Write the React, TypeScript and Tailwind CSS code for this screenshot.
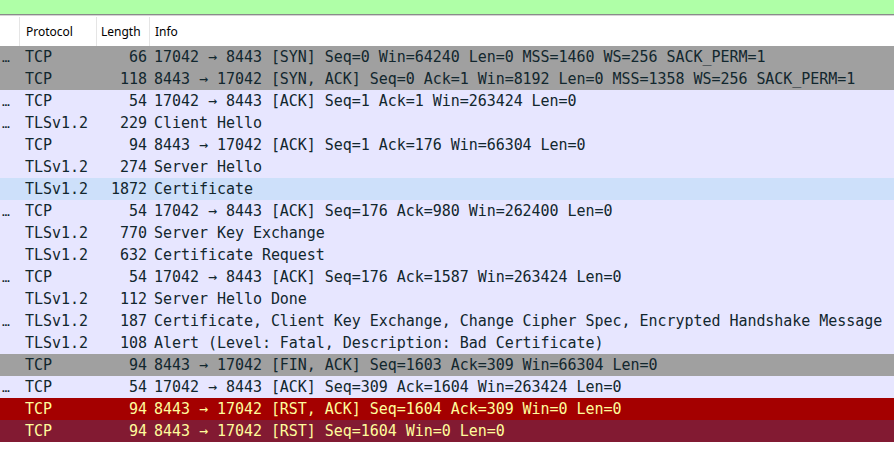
import React from 'react';

type Row = {
  dots?: boolean;
  proto: string;
  len: string;
  info: string;
  bg: string;
  fg?: string;
};

const GRAY = 'bg-[#a0a0a0]';
const LAV = 'bg-[#e7e6ff]';

const rows: Row[] = [
  { dots: true, proto: 'TCP', len: '66', info: '17042 → 8443 [SYN] Seq=0 Win=64240 Len=0 MSS=1460 WS=256 SACK_PERM=1', bg: GRAY },
  { proto: 'TCP', len: '118', info: '8443 → 17042 [SYN, ACK] Seq=0 Ack=1 Win=8192 Len=0 MSS=1358 WS=256 SACK_PERM=1', bg: GRAY },
  { dots: true, proto: 'TCP', len: '54', info: '17042 → 8443 [ACK] Seq=1 Ack=1 Win=263424 Len=0', bg: LAV },
  { dots: true, proto: 'TLSv1.2', len: '229', info: 'Client Hello', bg: LAV },
  { proto: 'TCP', len: '94', info: '8443 → 17042 [ACK] Seq=1 Ack=176 Win=66304 Len=0', bg: LAV },
  { proto: 'TLSv1.2', len: '274', info: 'Server Hello', bg: LAV },
  { proto: 'TLSv1.2', len: '1872', info: 'Certificate', bg: 'bg-[#cde0fa]' },
  { dots: true, proto: 'TCP', len: '54', info: '17042 → 8443 [ACK] Seq=176 Ack=980 Win=262400 Len=0', bg: LAV },
  { proto: 'TLSv1.2', len: '770', info: 'Server Key Exchange', bg: LAV },
  { proto: 'TLSv1.2', len: '632', info: 'Certificate Request', bg: LAV },
  { dots: true, proto: 'TCP', len: '54', info: '17042 → 8443 [ACK] Seq=176 Ack=1587 Win=263424 Len=0', bg: LAV },
  { proto: 'TLSv1.2', len: '112', info: 'Server Hello Done', bg: LAV },
  { dots: true, proto: 'TLSv1.2', len: '187', info: 'Certificate, Client Key Exchange, Change Cipher Spec, Encrypted Handshake Message', bg: LAV },
  { proto: 'TLSv1.2', len: '108', info: 'Alert (Level: Fatal, Description: Bad Certificate)', bg: LAV },
  { proto: 'TCP', len: '94', info: '8443 → 17042 [FIN, ACK] Seq=1603 Ack=309 Win=66304 Len=0', bg: GRAY },
  { dots: true, proto: 'TCP', len: '54', info: '17042 → 8443 [ACK] Seq=309 Ack=1604 Win=263424 Len=0', bg: LAV },
  { proto: 'TCP', len: '94', info: '8443 → 17042 [RST, ACK] Seq=1604 Ack=309 Win=0 Len=0', bg: 'bg-[#a40000]', fg: 'text-[#fffc9c]' },
  { proto: 'TCP', len: '94', info: '8443 → 17042 [RST] Seq=1604 Win=0 Len=0', bg: 'bg-[#821a32]', fg: 'text-[#fffc9c]' },
];

export default function App() {
  return (
    <div className="w-[894px] h-[469px] overflow-hidden bg-white">
      <div className="h-[14px] bg-[#afffa7]" />
      <div className="h-px bg-[#8a8a8a]" />
      <div className="h-px bg-[#d4d4d4]" />
      <div className="h-px bg-white" />
      {/* header */}
      <div className="flex h-[29px] text-[12px] text-black bg-white" style={{ fontFamily: '"Noto Sans", "Open Sans", sans-serif' }}>
        <div className="w-[20px] border-r border-[#e5e5e5]" />
        <div className="w-[77px] border-r border-[#e5e5e5] pl-[6px] flex items-center">Protocol</div>
        <div className="w-[53px] border-r border-[#e5e5e5] pl-[4px] flex items-center">Length</div>
        <div className="flex-1 pl-[5px] flex items-center">Info</div>
      </div>
      <div className="text-[15px] tracking-[-0.04px] whitespace-nowrap" style={{ fontFamily: '"DejaVu Sans Mono", "Liberation Mono", monospace' }}>
        {rows.map((r, i) => (
          <div key={i} className={`flex h-[22px] items-center ${r.bg} ${r.fg ?? 'text-[#12272e]'}`}>
            <div className="w-[20px] pl-[2px] text-[13px] leading-none">
              {r.dots ? '…' : null}
            </div>
            <div className="w-[77px] pl-[5px]">{r.proto}</div>
            <div className="w-[50px] text-right">{r.len}</div>
            <div className="pl-[7px]">{r.info}</div>
          </div>
        ))}
      </div>
    </div>
  );
}
